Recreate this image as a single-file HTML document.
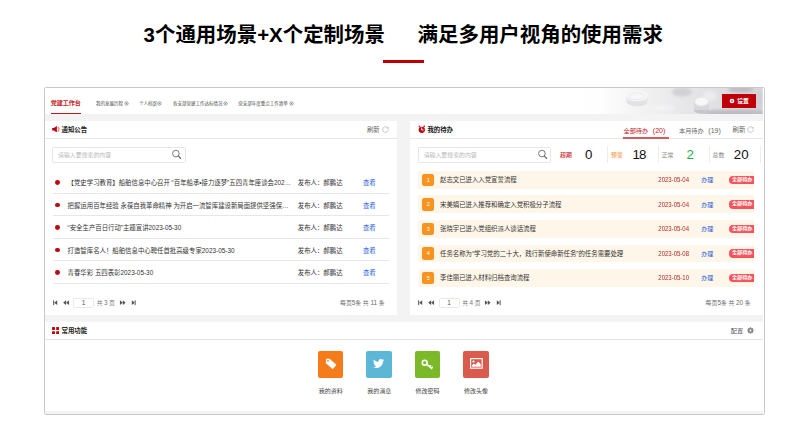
<!DOCTYPE html>
<html lang="zh-CN">
<head>
<meta charset="utf-8">
<title>3个通用场景+X个定制场景</title>
<style>
html,body{margin:0;padding:0;}
body{width:799px;height:436px;background:#fff;overflow:hidden;position:relative;
 font-family:"Liberation Sans","Noto Sans CJK SC",sans-serif;color:#333;}
#root{position:absolute;left:0;top:0;width:799px;height:436px;}
.a{position:absolute;}
.t{position:absolute;white-space:nowrap;line-height:10px;height:10px;font-size:6.4px;color:#333;}
.h1{position:absolute;white-space:nowrap;font-weight:bold;font-size:20.45px;line-height:24px;color:#000;top:22.6px;}
.b{font-weight:bold;}
.red{color:#c4161c;}
.blue{color:#2a5fd9;}
.gray{color:#777;}
.line{position:absolute;height:1px;background:#e6e6e6;}
.dot{position:absolute;width:4.8px;height:4.8px;border-radius:50%;background:#bd0a10;}
.row{position:absolute;left:418.1px;width:336px;height:17.8px;background:#fef6e8;}
.num{position:absolute;left:422.4px;width:12px;height:12.4px;border-radius:2.2px;background:#f7931e;color:#fff;
 font-size:5.6px;line-height:12.4px;text-align:center;}
.pill{position:absolute;left:729.3px;width:24.8px;height:8.2px;border-radius:4.1px 0 0 4.1px;background:#fa525a;color:#fff;
 font-size:5.1px;line-height:7.3px;white-space:nowrap;overflow:hidden;text-indent:2.7px;font-weight:bold;}
.vd{position:absolute;width:1px;top:146px;height:17px;background:#ededed;}
.big{position:absolute;white-space:nowrap;font-size:13.3px;line-height:16px;top:146.6px;color:#111;width:30px;text-align:center;}
.ic{position:absolute;top:350.7px;width:25.5px;height:27px;border-radius:2px;}
.d2{font-size:6.4px;}
.dg{font-size:6.4px;margin:0 1.500px;}
.inp{position:absolute;box-sizing:border-box;border:1px solid #e6e6e6;background:#fff;border-radius:1.5px;}
</style>
</head>
<body>
<div id="root">

<!-- Titles -->
<div class="h1" style="left:143.6px;">3个通用场景+X个定制场景</div>
<div class="h1" style="left:417.6px;">满足多用户视角的使用需求</div>
<div class="a" style="left:383px;top:60px;width:41px;height:3px;background:#be0005;"></div>

<!-- Screenshot frame -->
<div class="a" style="left:43.7px;top:87.1px;width:719.4px;height:326.3px;border:1px solid #c9c9c9;border-radius:1.5px;background:#fff;"></div>
<!-- gray page background -->
<div class="a" style="left:44.7px;top:114.3px;width:718px;height:299.7px;background:#f3f3f3;"></div>

<!-- header photo -->
<svg class="a" style="left:560px;top:88px;" width="202.7" height="26.3" viewBox="0 0 202.7 26.3">
 <defs>
  <linearGradient id="hg" x1="0" x2="1" y1="0" y2="0">
   <stop offset="0" stop-color="#ffffff"/><stop offset="0.2" stop-color="#fefefe"/><stop offset="0.34" stop-color="#f6f6f7"/><stop offset="0.48" stop-color="#eeeeef"/><stop offset="0.62" stop-color="#e7e7ea"/><stop offset="0.8" stop-color="#dfdfe3"/><stop offset="1" stop-color="#d6d6db"/>
  </linearGradient>
  <linearGradient id="hv" x1="0" x2="1" y1="0" y2="0">
   <stop offset="0" stop-color="#fff" stop-opacity="1"/><stop offset="0.55" stop-color="#fff" stop-opacity="1"/><stop offset="0.75" stop-color="#fff" stop-opacity="0"/>
  </linearGradient>
  <filter id="bl" x="-20%" y="-30%" width="140%" height="160%"><feGaussianBlur stdDeviation="0.55"/></filter>
  <filter id="bl2" x="-30%" y="-60%" width="160%" height="220%"><feGaussianBlur stdDeviation="1.5"/></filter>
  <clipPath id="hc"><rect width="202.7" height="26.3"/></clipPath>
 </defs>
 <rect width="202.7" height="26.3" fill="url(#hg)"/>
 <g clip-path="url(#hc)">
 <g filter="url(#bl2)">
  <ellipse cx="122" cy="4" rx="10" ry="4.5" fill="#d0d0d5"/>
  <ellipse cx="181" cy="1.5" rx="13" ry="3.5" fill="#bdbdc3"/>
  <ellipse cx="175" cy="25" rx="34" ry="3.6" fill="#bcbcc2"/>
  <ellipse cx="150" cy="8" rx="7" ry="5" fill="#ececee"/>
  <ellipse cx="100" cy="20" rx="14" ry="3" fill="#f3f3f4"/>
  <ellipse cx="199" cy="12" rx="4" ry="10" fill="#cfcfd4"/>
 </g>
 <g filter="url(#bl)">
  <ellipse cx="77" cy="13.500" rx="10.500" ry="5" fill="#e2e2e5"/>
  <rect x="66.500" y="8" width="21" height="5.500" fill="#e6e6e9"/>
  <ellipse cx="77" cy="8" rx="10.500" ry="5.200" fill="#f7f7f8"/>
  <ellipse cx="77" cy="8.300" rx="7.500" ry="3.500" fill="none" stroke="#e6e6e9" stroke-width="0.800"/>
  <ellipse cx="141.500" cy="22" rx="7.600" ry="3.800" fill="#c6c6cb"/>
  <rect x="133.900" y="14" width="15.200" height="8" fill="#d8d8dc"/>
  <ellipse cx="141.500" cy="13.800" rx="7.600" ry="4.700" fill="#e6e6e9"/>
  <ellipse cx="141.500" cy="13.600" rx="6.400" ry="3.800" fill="#f8f8f9"/>
 </g>
 </g>
</svg>

<!-- tabs -->
<div class="t b red" style="left:50.7px;top:97.9px;font-size:6.05px;">党建工作台</div>
<div class="a" style="left:50.6px;top:112.9px;width:30px;height:1.3px;background:#c4161c;"></div>
<div class="t" style="left:96px;top:99.2px;font-size:4.5px;color:#4a4a4a;">我的发展历程</div>
<svg class="a" style="left:123.6px;top:101.4px;" width="5" height="5" viewBox="0 0 5 5"><circle cx="2.500" cy="2.500" r="1.650" fill="none" stroke="#7a7a7a" stroke-width="0.750"/><circle cx="2.500" cy="2.500" r="0.550" fill="#7a7a7a"/></svg>
<div class="t" style="left:139px;top:99.2px;font-size:4.5px;color:#4a4a4a;">个人档案</div>
<svg class="a" style="left:157.4px;top:101.4px;" width="5" height="5" viewBox="0 0 5 5"><circle cx="2.500" cy="2.500" r="1.650" fill="none" stroke="#7a7a7a" stroke-width="0.750"/><circle cx="2.500" cy="2.500" r="0.550" fill="#7a7a7a"/></svg>
<div class="t" style="left:172.9px;top:99.2px;font-size:4.5px;color:#4a4a4a;">各支部党建工作达标情况</div>
<svg class="a" style="left:223.2px;top:101.4px;" width="5" height="5" viewBox="0 0 5 5"><circle cx="2.500" cy="2.500" r="1.650" fill="none" stroke="#7a7a7a" stroke-width="0.750"/><circle cx="2.500" cy="2.500" r="0.550" fill="#7a7a7a"/></svg>
<div class="t" style="left:238.2px;top:99.2px;font-size:4.5px;color:#4a4a4a;">党支部年度重点工作清单</div>
<svg class="a" style="left:288.9px;top:101.4px;" width="5" height="5" viewBox="0 0 5 5"><circle cx="2.500" cy="2.500" r="1.650" fill="none" stroke="#7a7a7a" stroke-width="0.750"/><circle cx="2.500" cy="2.500" r="0.550" fill="#7a7a7a"/></svg>

<!-- settings button -->
<div class="a" style="left:722.4px;top:93.8px;width:34px;height:14.1px;background:#c00008;"></div>
<svg class="a" style="left:729px;top:98px;" width="6" height="6" viewBox="0 0 6 6"><circle cx="3" cy="3" r="2.300" fill="#fff"/><circle cx="3" cy="3" r="0.800" fill="#c00008"/></svg>
<div class="t b" style="left:737.2px;top:95.6px;font-size:5.8px;color:#fff;">设置</div>

<!-- LEFT PANEL -->
<div class="a" style="left:44.7px;top:120.9px;width:352.3px;height:194.2px;background:#fff;"></div>
<div class="line" style="left:44.7px;top:138px;width:352.3px;"></div>
<svg class="a" style="left:52px;top:125.6px;" width="8.400" height="6.600" viewBox="0 0 8.400 6.600">
 <path d="M0.200 2.100h1.600L4.900 0.100v6.400L1.800 4.500H0.200z" fill="#c00008"/>
 <path d="M6.100 1.300a2.700 2.700 0 0 1 0 4" fill="none" stroke="#e77f83" stroke-width="1.300" stroke-linecap="round"/>
</svg>
<div class="t b" style="left:61.5px;top:124.9px;color:#222;">通知公告</div>
<div class="t" style="left:366.9px;top:124.6px;color:#666;">刷新</div>
<svg class="a" style="left:381.8px;top:126.2px;" width="7" height="7" viewBox="0 0 14 14"><path d="M11.800 4.200A5.600 5.600 0 1 0 12.600 7" fill="none" stroke="#aaa" stroke-width="1.300"/><path d="M12.800 1.500v3.500h-3.500z" fill="#aaa"/></svg>

<div class="inp" style="left:52px;top:147px;width:134px;height:16px;"></div>
<div class="t" style="left:58.1px;top:149.9px;font-size:5.9px;color:#b8b8b8;">请输入要搜索的内容</div>
<svg class="a" style="left:171px;top:149px;" width="11" height="11" viewBox="0 0 11 11"><circle cx="4.900" cy="4.550" r="3.300" fill="none" stroke="#666" stroke-width="0.900"/><path d="M7.300 6.950L9.700 9.500" stroke="#666" stroke-width="1.100" stroke-linecap="round"/></svg>

<!-- rows -->
<div class="dot" style="left:54.9px;top:180.20px;"></div>
<div class="t" style="left:67.6px;top:178.00px;">【党史学习教育】船舶信息中心召开 “百年船承•接力逐梦”五四青年座谈会202…</div>
<div class="t" style="left:297.8px;top:178.00px;">发布人：郝鹏达</div>
<div class="t blue" style="left:362.9px;top:178.00px;">查看</div>
<div class="line" style="left:52.6px;top:192.70px;width:336px;"></div>

<div class="dot" style="left:54.9px;top:202.70px;"></div>
<div class="t" style="left:67.6px;top:200.50px;">把握运用百年经验 永葆自我革命精神 为开启一流智库建设新局面提供坚强保…</div>
<div class="t" style="left:297.8px;top:200.50px;">发布人：郝鹏达</div>
<div class="t blue" style="left:362.9px;top:200.50px;">查看</div>
<div class="line" style="left:52.6px;top:215.25px;width:336px;"></div>

<div class="dot" style="left:54.9px;top:225.20px;"></div>
<div class="t" style="left:67.6px;top:223.00px;">“安全生产百日行动”主题宣讲2023-05-30</div>
<div class="t" style="left:297.8px;top:223.00px;">发布人：郝鹏达</div>
<div class="t blue" style="left:362.9px;top:223.00px;">查看</div>
<div class="line" style="left:52.6px;top:237.80px;width:336px;"></div>

<div class="dot" style="left:54.9px;top:247.70px;"></div>
<div class="t" style="left:67.6px;top:245.50px;">打造智库名人！船舶信息中心聘任首批高级专家2023-05-30</div>
<div class="t" style="left:297.8px;top:245.50px;">发布人：郝鹏达</div>
<div class="t blue" style="left:362.9px;top:245.50px;">查看</div>
<div class="line" style="left:52.6px;top:260.35px;width:336px;"></div>

<div class="dot" style="left:54.9px;top:270.20px;"></div>
<div class="t" style="left:67.6px;top:268.00px;">青春华彩 五四表彰2023-05-30</div>
<div class="t" style="left:297.8px;top:268.00px;">发布人：郝鹏达</div>
<div class="t blue" style="left:362.9px;top:268.00px;">查看</div>
<div class="line" style="left:52.6px;top:282.90px;width:336px;"></div>

<!-- left pagination -->
<svg class="a" style="left:52.8px;top:300.2px;" width="84" height="5.400" viewBox="0 0 84 5.400" fill="#555">
 <rect x="0.100" y="0.300" width="1" height="4.800"/><path d="M4.200 0.300v4.800L1.100 2.700z"/>
 <path d="M13.050 0.300v4.800L10.100 2.700z"/><path d="M16 0.300v4.800L13.050 2.700z"/>
 <path d="M67 0.300v4.800L69.850 2.700z"/><path d="M69.850 0.300v4.800L72.700 2.700z"/>
 <path d="M78.900 0.300v4.800L81.800 2.700z"/><rect x="81.700" y="0.300" width="1" height="4.800"/>
</svg>
<div class="inp" style="left:73px;top:297.6px;width:21px;height:10.4px;border-color:#e9e9e9;"></div>
<div class="t" style="left:73.5px;width:20px;text-align:center;top:297.9px;font-size:6.4px;color:#555;">1</div>
<div class="t gray" style="left:96.7px;top:297.7px;font-size:5.8px;">共<span class="dg">3</span>页</div>
<div class="t gray" style="left:340px;top:297.7px;font-size:5.9px;color:#6a6a6a;">每页<span class="d2">5</span>条 共 <span class="d2">11</span> 条</div>

<!-- RIGHT PANEL -->
<div class="a" style="left:409.9px;top:120.9px;width:352.8px;height:194.2px;background:#fff;"></div>
<div class="line" style="left:409.9px;top:138px;width:352.8px;"></div>
<svg class="a" style="left:417.800px;top:124.8px;" width="7.600" height="8.400" viewBox="0 0 15.200 16.800">
 <circle cx="7.600" cy="9.800" r="6.300" fill="#b90a10"/>
 <circle cx="2.800" cy="2.600" r="1.800" fill="#c8232a"/><circle cx="12.400" cy="2.600" r="1.800" fill="#c8232a"/>
 <path d="M7.400 5.200v4.800h3.800" fill="none" stroke="#fff" stroke-width="1.800"/>
</svg>
<div class="t b" style="left:427.4px;top:124.9px;color:#222;">我的待办</div>
<div class="t red" style="left:623.5px;top:126px;font-size:6.2px;">全部待办<span style="font-size:7px;margin-left:4.600px;">(20)</span></div>
<div class="a" style="left:623.1px;top:137px;width:45.8px;height:1.8px;background:#d65c60;"></div>
<div class="t" style="left:679px;top:126px;font-size:6.2px;color:#666;">本月待办<span style="font-size:7px;margin-left:4.600px;">(19)</span></div>
<div class="t" style="left:732.5px;top:124.500px;color:#666;">刷新</div>
<svg class="a" style="left:747.4px;top:126.2px;" width="7" height="7" viewBox="0 0 14 14"><path d="M11.800 4.200A5.600 5.600 0 1 0 12.600 7" fill="none" stroke="#aaa" stroke-width="1.300"/><path d="M12.800 1.500v3.500h-3.500z" fill="#aaa"/></svg>

<div class="inp" style="left:418px;top:147px;width:133px;height:16px;"></div>
<div class="t" style="left:423.7px;top:149.9px;font-size:5.9px;color:#b8b8b8;">请输入要搜索的内容</div>
<svg class="a" style="left:536.6px;top:149px;" width="11" height="11" viewBox="0 0 11 11"><circle cx="4.900" cy="4.550" r="3.300" fill="none" stroke="#666" stroke-width="0.900"/><path d="M7.300 6.950L9.700 9.500" stroke="#666" stroke-width="1.100" stroke-linecap="round"/></svg>

<!-- stats -->
<div class="t" style="left:560px;top:149.500px;font-size:5.9px;color:#cc2229;font-weight:500;">超期</div>
<div class="big" style="left:573.6px;">0</div>
<div class="vd" style="left:606.7px;"></div>
<div class="t" style="left:611.1px;top:149.500px;font-size:5.9px;color:#f5a04a;font-weight:500;">预警</div>
<div class="big" style="left:624.5px;"><span style="letter-spacing:-0.9px;">1</span>8</div>
<div class="vd" style="left:657.8px;"></div>
<div class="t" style="left:661.7px;top:149.500px;font-size:5.9px;color:#888;">正常</div>
<div class="big" style="left:675.3px;color:#1bb04e;">2</div>
<div class="vd" style="left:708.7px;"></div>
<div class="t" style="left:712.600px;top:149.500px;font-size:5.9px;color:#888;">总数</div>
<div class="big" style="left:726.2px;">20</div>
<div class="vd" style="left:760px;"></div>

<!-- todo rows -->
<div class="row" style="top:170.90px;"></div>
<div class="num" style="top:173.60px;">1</div>
<div class="t" style="left:440px;top:175.00px;">赵志文已进入入党宣誓流程</div>
<div class="t" style="left:658.3px;top:175.00px;font-size:6px;color:#b0282e;transform:scaleY(1.14);">2023-05-04</div>
<div class="t blue" style="left:701.2px;top:175.00px;font-size:6px;">办理</div>
<div class="pill" style="top:175.75px;">全部待办</div>

<div class="row" style="top:195.48px;"></div>
<div class="num" style="top:198.18px;">2</div>
<div class="t" style="left:440px;top:199.58px;">宋美娟已进入推荐和确定入党积极分子流程</div>
<div class="t" style="left:658.3px;top:199.58px;font-size:6px;color:#b0282e;transform:scaleY(1.14);">2023-05-04</div>
<div class="t blue" style="left:701.2px;top:199.58px;font-size:6px;">办理</div>
<div class="pill" style="top:200.33px;">全部待办</div>

<div class="row" style="top:220.06px;"></div>
<div class="num" style="top:222.76px;">3</div>
<div class="t" style="left:440px;top:224.16px;">张晓宇已进入党组织派人谈话流程</div>
<div class="t" style="left:658.3px;top:224.16px;font-size:6px;color:#b0282e;transform:scaleY(1.14);">2023-05-04</div>
<div class="t blue" style="left:701.2px;top:224.16px;font-size:6px;">办理</div>
<div class="pill" style="top:224.91px;">全部待办</div>

<div class="row" style="top:244.64px;"></div>
<div class="num" style="top:247.34px;">4</div>
<div class="t" style="left:440px;top:248.74px;">任务名称为“学习党的二十大，践行新使命新任务”的任务需要处理</div>
<div class="t" style="left:658.3px;top:248.74px;font-size:6px;color:#b0282e;transform:scaleY(1.14);">2023-05-08</div>
<div class="t blue" style="left:701.2px;top:248.74px;font-size:6px;">办理</div>
<div class="pill" style="top:249.49px;">全部待办</div>

<div class="row" style="top:269.22px;"></div>
<div class="num" style="top:271.92px;">5</div>
<div class="t" style="left:440px;top:273.32px;">李佳丽已进入材料归档查询流程</div>
<div class="t" style="left:658.3px;top:273.32px;font-size:6px;color:#b0282e;transform:scaleY(1.14);">2023-05-10</div>
<div class="t blue" style="left:701.2px;top:273.32px;font-size:6px;">办理</div>
<div class="pill" style="top:274.07px;">全部待办</div>

<!-- right pagination -->
<svg class="a" style="left:418.4px;top:300.2px;" width="84" height="5.400" viewBox="0 0 84 5.400" fill="#555">
 <rect x="0.100" y="0.300" width="1" height="4.800"/><path d="M4.200 0.300v4.800L1.100 2.700z"/>
 <path d="M13.050 0.300v4.800L10.100 2.700z"/><path d="M16 0.300v4.800L13.050 2.700z"/>
 <path d="M67 0.300v4.800L69.850 2.700z"/><path d="M69.850 0.300v4.800L72.700 2.700z"/>
 <path d="M78.900 0.300v4.800L81.800 2.700z"/><rect x="81.700" y="0.300" width="1" height="4.800"/>
</svg>
<div class="inp" style="left:438.6px;top:297.6px;width:21px;height:10.4px;border-color:#e9e9e9;"></div>
<div class="t" style="left:439.1px;width:20px;text-align:center;top:297.9px;font-size:6.4px;color:#555;">1</div>
<div class="t gray" style="left:462.3px;top:297.7px;font-size:5.8px;">共<span class="dg">4</span>页</div>
<div class="t gray" style="left:705.6px;top:297.7px;font-size:5.9px;color:#6a6a6a;">每页<span class="d2">5</span>条 共 <span class="d2">20</span> 条</div>

<!-- BOTTOM PANEL -->
<div class="a" style="left:44.7px;top:321px;width:718px;height:1px;background:#f6f6f6;"></div>
<div class="a" style="left:44.7px;top:322px;width:718px;height:88.8px;background:#fff;"></div>
<div class="line" style="left:44.7px;top:339px;width:718px;background:#e2e2e2;"></div>
<svg class="a" style="left:52.100px;top:327px;" width="7.100" height="7.100" viewBox="0 0 12 12" fill="#c00008">
 <rect x="0" y="0" width="5" height="5" rx="1"/><rect x="7" y="0" width="5" height="5" rx="1"/>
 <rect x="0" y="7" width="5" height="5" rx="1"/><rect x="7" y="7" width="5" height="5" rx="1"/>
</svg>
<div class="t b" style="left:61.6px;top:326.2px;color:#222;">常用功能</div>
<div class="t" style="left:730.8px;top:326.1px;font-size:6.2px;color:#555;">配置</div>
<svg class="a" style="left:747.350px;top:326.950px;" width="7" height="7" viewBox="0 0 7 7"><path d="M4.14 6.74L2.86 6.74L2.82 6.16L2.10 5.87L1.67 6.24L0.76 5.33L1.13 4.90L0.84 4.18L0.26 4.14L0.26 2.86L0.84 2.82L1.13 2.10L0.76 1.67L1.67 0.76L2.10 1.13L2.82 0.84L2.86 0.26L4.14 0.26L4.18 0.84L4.90 1.13L5.33 0.76L6.24 1.67L5.87 2.10L6.16 2.82L6.74 2.86L6.74 4.14L6.16 4.18L5.87 4.90L6.24 5.33L5.33 6.24L4.90 5.87L4.18 6.16z" fill="#8a8a8a"/><circle cx="3.500" cy="3.500" r="0.900" fill="#fff"/></svg>

<!-- icons -->
<div class="ic" style="left:317.9px;background:#f57c1b;"></div>
<svg class="a" style="left:324.600px;top:358.2px;" width="12" height="11.600" viewBox="0 0 24 23.200">
 <path d="M2.500 1.500h6.500l13 11.200a1.500 1.500 0 0 1 .1 2.200l-5.600 6.300a1.500 1.500 0 0 1-2.200 .1L1.500 10z" fill="#fff" transform="translate(0,0)"/>
 <circle cx="6" cy="5.600" r="1.700" fill="#f57c1b"/>
</svg>
<div class="ic" style="left:366.4px;background:#5cb6d6;"></div>
<svg class="a" style="left:373.400px;top:359.400px;" width="11.200" height="9.100" viewBox="0 0 24 19.500">
 <path d="M24 2.300c-.9.400-1.800.7-2.800.8 1-.6 1.800-1.600 2.200-2.700-1 .6-2 1-3.100 1.200C19.400.6 18.100 0 16.600 0c-2.700 0-4.900 2.200-4.900 4.900 0 .4 0 .8.100 1.100C7.700 5.800 4.100 3.900 1.700.9 1.200 1.600 1 2.500 1 3.400c0 1.700.9 3.200 2.200 4.100-.8 0-1.600-.2-2.200-.6v.1c0 2.400 1.700 4.400 3.900 4.800-.4.100-.8.200-1.300.2-.3 0-.6 0-.9-.1.600 2 2.400 3.400 4.600 3.400-1.700 1.300-3.800 2.100-6.100 2.100-.4 0-.8 0-1.200-.1 2.200 1.400 4.800 2.200 7.500 2.200 9.100 0 14-7.500 14-14v-.6c1-.7 1.800-1.600 2.500-2.600z" fill="#fff"/>
</svg>
<div class="ic" style="left:414.8px;background:#7bb928;"></div>
<svg class="a" style="left:421px;top:358.600px;" width="12.400" height="11.400" viewBox="0 0 24.800 22.800">
 <circle cx="7.400" cy="7.400" r="4.800" fill="none" stroke="#fff" stroke-width="3.200"/>
 <path d="M11.200 10.400L22.500 19.800M17.200 15.600l2.800-3.200M20.800 18.600l2.600-3" fill="none" stroke="#fff" stroke-width="3" stroke-linecap="butt"/>
</svg>
<div class="ic" style="left:463.3px;background:#da5a4c;"></div>
<svg class="a" style="left:469.800px;top:358.400px;" width="12.800" height="10.800" viewBox="0 0 25.600 21.600">
 <rect x="1.200" y="1.200" width="23.200" height="19.200" fill="none" stroke="#fff" stroke-width="2.400"/>
 <circle cx="7" cy="7" r="2.200" fill="#fff"/>
 <path d="M4 17.500v-3l4-3.500 3 2.400 5.500-6.400 5 5.500v5z" fill="#fff"/>
</svg>
<div class="t" style="left:318.800px;top:386px;font-size:6px;color:#444;">我的资料</div>
<div class="t" style="left:367.2px;top:386px;font-size:6px;color:#444;">我的消息</div>
<div class="t" style="left:415.600px;top:386px;font-size:6px;color:#444;">修改密码</div>
<div class="t" style="left:464.1px;top:386px;font-size:6px;color:#444;">修改头像</div>

</div>
</body>
</html>
